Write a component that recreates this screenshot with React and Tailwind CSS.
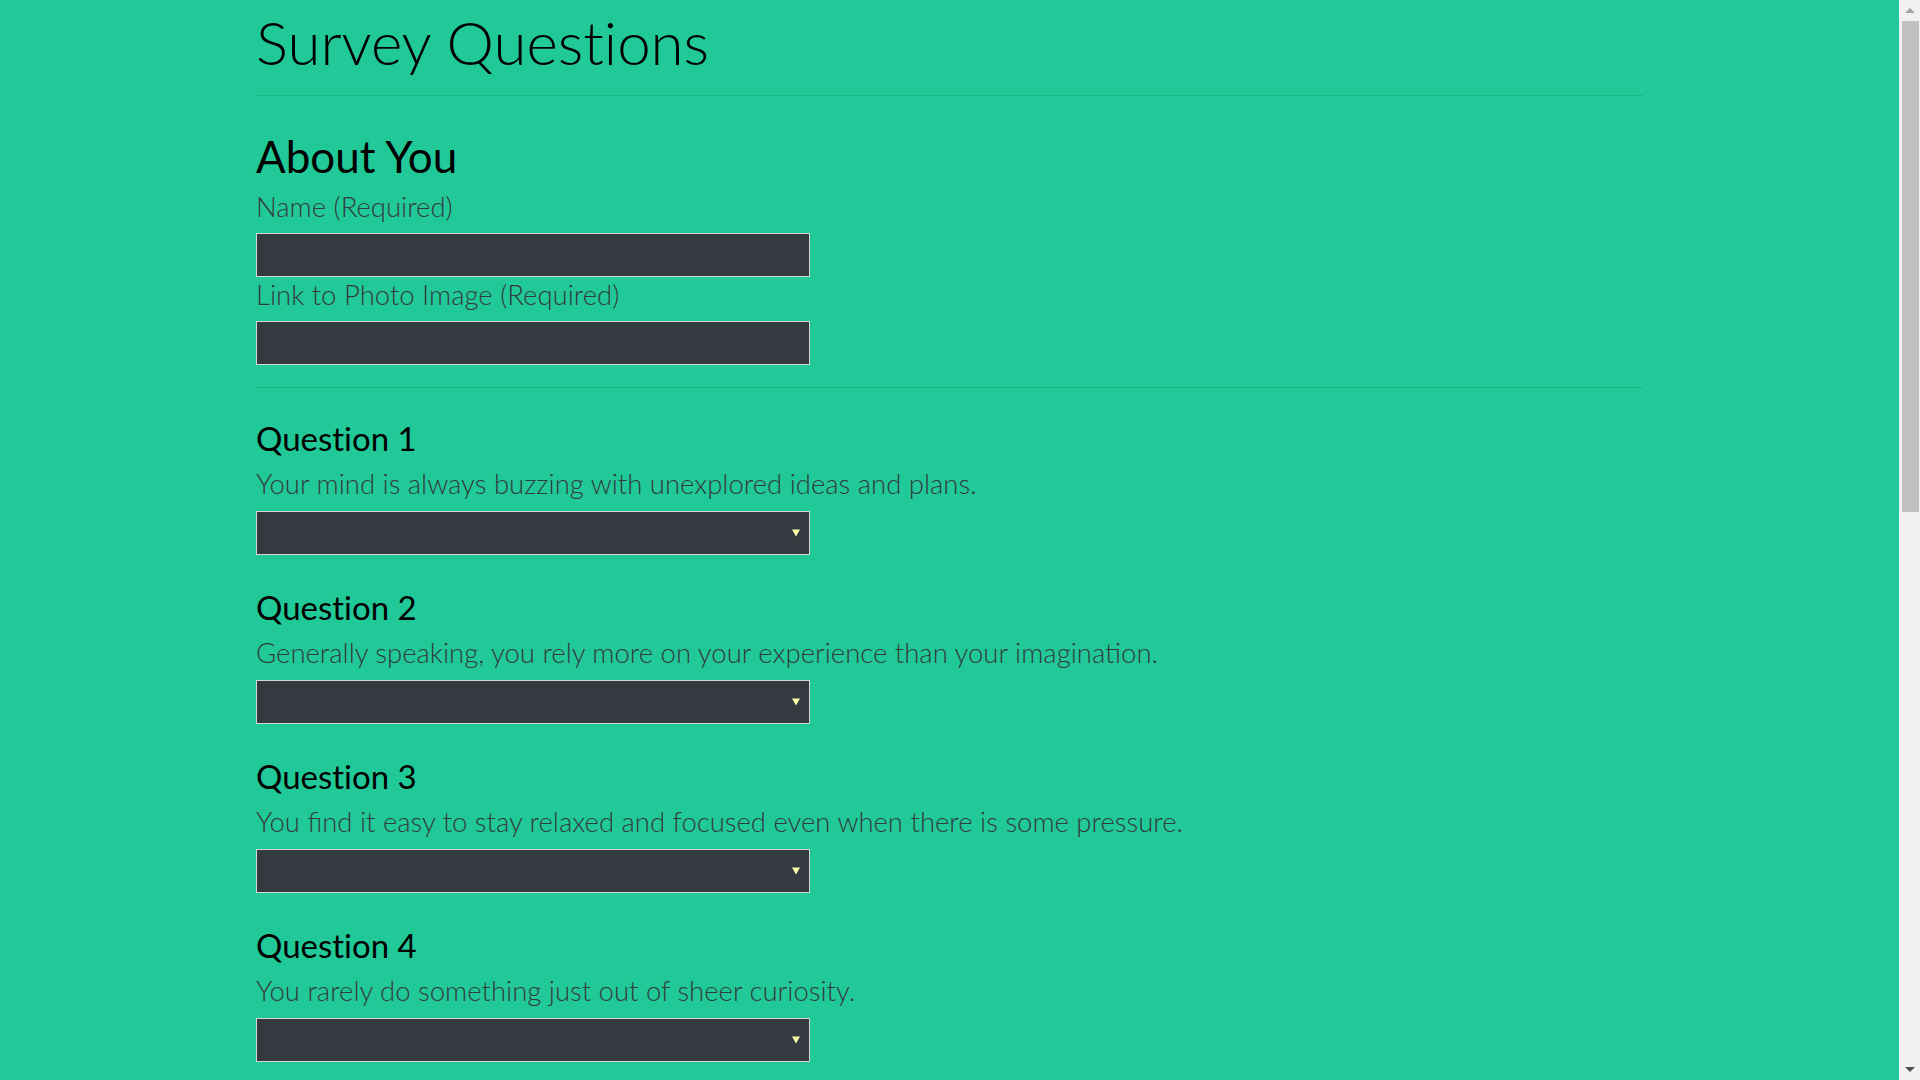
const QUESTIONS = [
  'Your mind is always buzzing with unexplored ideas and plans.',
  'Generally speaking, you rely more on your experience than your imagination.',
  'You find it easy to stay relaxed and focused even when there is some pressure.',
  'You rarely do something just out of sheer curiosity.',
  'People can rarely upset you.',
  "It is often difficult for you to relate to other people's feelings.",
  'In a discussion, truth should be more important than people\u2019s sensitivities.',
  'You rarely get carried away by fantasies and ideas.',
  "You think that everyone's views should be respected regardless of whether they are supported by facts or not.",
  'You feel more energetic after spending time with a group of people.',
];

const OPTIONS = ['', '1 (Strongly Disagree)', '2', '3', '4', '5 (Strongly Agree)'];

function Field({ label }) {
  return (
    <div className="flex flex-col">
      <label className="text-[27.5px] leading-[34px] font-light text-[#343a40]">{label}</label>
      <input
        type="text"
        className="mt-[9px] w-[554px] h-[44px] bg-[#343a40] border border-[#d6d6d6] text-white px-3 text-[20px] outline-none"
      />
    </div>
  );
}

function Question({ n, text }) {
  return (
    <div className="flex flex-col mb-[31px]">
      <h3 className="text-[33px] leading-[42px] font-normal text-black [font-variant-ligatures:none]">
        Question {n}
      </h3>
      <p className="mt-[8px] text-[27.5px] leading-[34px] font-light text-[#343a40]">{text}</p>
      <div className="relative mt-[10px] w-[554px]">
        <select className="w-full h-[44px] bg-[#343a40] border border-[#d6d6d6] text-white px-3 text-[20px] appearance-none outline-none">
          {OPTIONS.map((o) => (
            <option key={o}>{o}</option>
          ))}
        </select>
        {/* arrow */}
        <span className="pointer-events-none absolute right-[10px] top-1/2 -translate-y-1/2 w-0 h-0 border-l-[4px] border-r-[4px] border-t-[7px] border-l-transparent border-r-transparent border-t-[#fdfdaa]" />
      </div>
    </div>
  );
}

function Scrollbar() {
  return (
    <div className="w-[21px] h-screen bg-[#f1f1f1] flex flex-col items-center shrink-0">
      <div className="h-[21px] w-full flex items-center justify-center">
        <span className="w-0 h-0 border-l-[5px] border-r-[5px] border-b-[5px] border-l-transparent border-r-transparent border-b-[#a3a3a3]" />
      </div>
      <div className="w-[17px] h-[491px] bg-[#c1c1c1] ml-[1px]" />
      <div className="flex-1" />
      <div className="h-[21px] w-full flex items-center justify-center">
        <span className="w-0 h-0 border-l-[5px] border-r-[5px] border-t-[5px] border-l-transparent border-r-transparent border-t-[#505050]" />
      </div>
    </div>
  );
}

export default function App() {
  return (
    <div className="h-screen flex bg-[#20c997] font-['Lato','Open_Sans',sans-serif] overflow-hidden">
      <div className="flex-1 h-screen overflow-y-auto">
        <div className="w-[1387px] mx-auto pt-[4px] pb-[60px]">
          <h1 className="text-[60px] leading-[76px] font-light text-black [font-variant-ligatures:none]">
            Survey Questions
          </h1>
          <hr className="mt-[15px] border-0 border-t border-black/10" />

          <h2 className="mt-[33px] text-[44px] leading-[54px] font-normal text-black">About You</h2>
          <div className="mt-[7px] flex flex-col gap-[1px]">
            <Field label="Name (Required)" />
            <Field label="Link to Photo Image (Required)" />
          </div>
          <hr className="mt-[22px] mb-[29px] border-0 border-t border-black/10" />

          {QUESTIONS.map((q, i) => (
            <Question key={i} n={i + 1} text={q} />
          ))}

          <button className="mt-[10px] px-6 py-3 bg-[#343a40] text-white text-[24px] font-light border border-[#d6d6d6]">
            Submit
          </button>
        </div>
      </div>
      <Scrollbar />
    </div>
  );
}
